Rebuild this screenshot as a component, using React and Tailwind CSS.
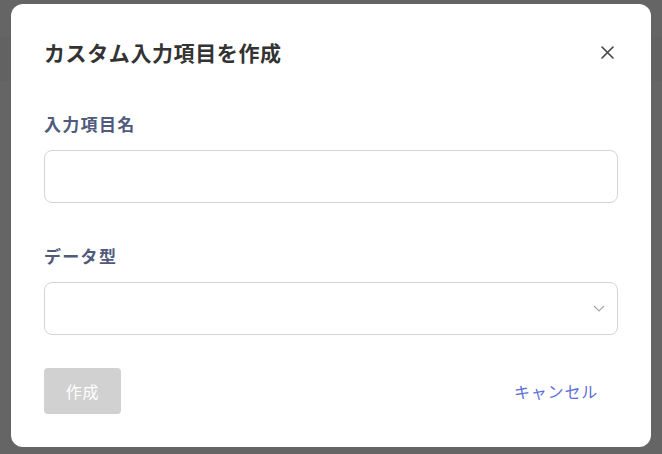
import React from "react";

const font = { fontFamily: '"Noto Sans CJK JP", "Noto Sans", sans-serif' };

const App = () => {
  return (
    <div
      className="relative w-[662px] h-[454px] bg-[#656565] overflow-hidden"
      style={font}
    >
      <div className="absolute left-0 right-0 top-[37px] h-[44px] bg-[#626262]" />
      <div className="absolute left-[11px] top-[4px] w-[640px] h-[443px] bg-white rounded-[12px] px-[33px] pt-[34px] flex flex-col">
        <div className="flex items-center justify-between h-[28px]">
          <h2 className="text-[21px] leading-[28px] tracking-[0.6px] font-bold text-[#333333]">
            カスタム入力項目を作成
          </h2>
          <button className="mr-[4px] text-[#444444]">
            <svg width="13" height="13" viewBox="0 0 13 13" fill="none">
              <path
                d="M1 1L12 12M12 1L1 12"
                stroke="currentColor"
                strokeWidth="1.6"
                strokeLinecap="round"
              />
            </svg>
          </button>
        </div>

        <label className="mt-[47px] text-[17px] leading-[22px] tracking-[1.3px] font-bold text-[#505a7b]">
          入力項目名
        </label>
        <input
          type="text"
          className="mt-[15px] h-[53px] w-full rounded-[8px] border border-[#d4d4d4] px-3 outline-none"
        />

        <label className="mt-[42px] text-[17px] leading-[22px] tracking-[1.3px] font-bold text-[#505a7b]">
          データ型
        </label>
        <div className="mt-[15px] relative h-[53px] w-full rounded-[8px] border border-[#d4d4d4]">
          <svg
            className="absolute right-[12px] top-[22px]"
            width="12"
            height="7"
            viewBox="0 0 12 7"
            fill="none"
          >
            <path d="M1 1L6 6L11 1" stroke="#a3a7b4" strokeWidth="1.2" />
          </svg>
        </div>

        <div className="mt-[33px] flex items-center justify-between">
          <button className="h-[46px] w-[77px] rounded-[4px] bg-[#d1d1d1] text-white text-[16px] tracking-[0.8px]">
            作成
          </button>
          <button className="h-[46px] pl-[21px] pr-[20px] text-[16px] tracking-[0.8px] text-[#5b6fd8]">
            キャンセル
          </button>
        </div>
      </div>
    </div>
  );
};

export default App;
